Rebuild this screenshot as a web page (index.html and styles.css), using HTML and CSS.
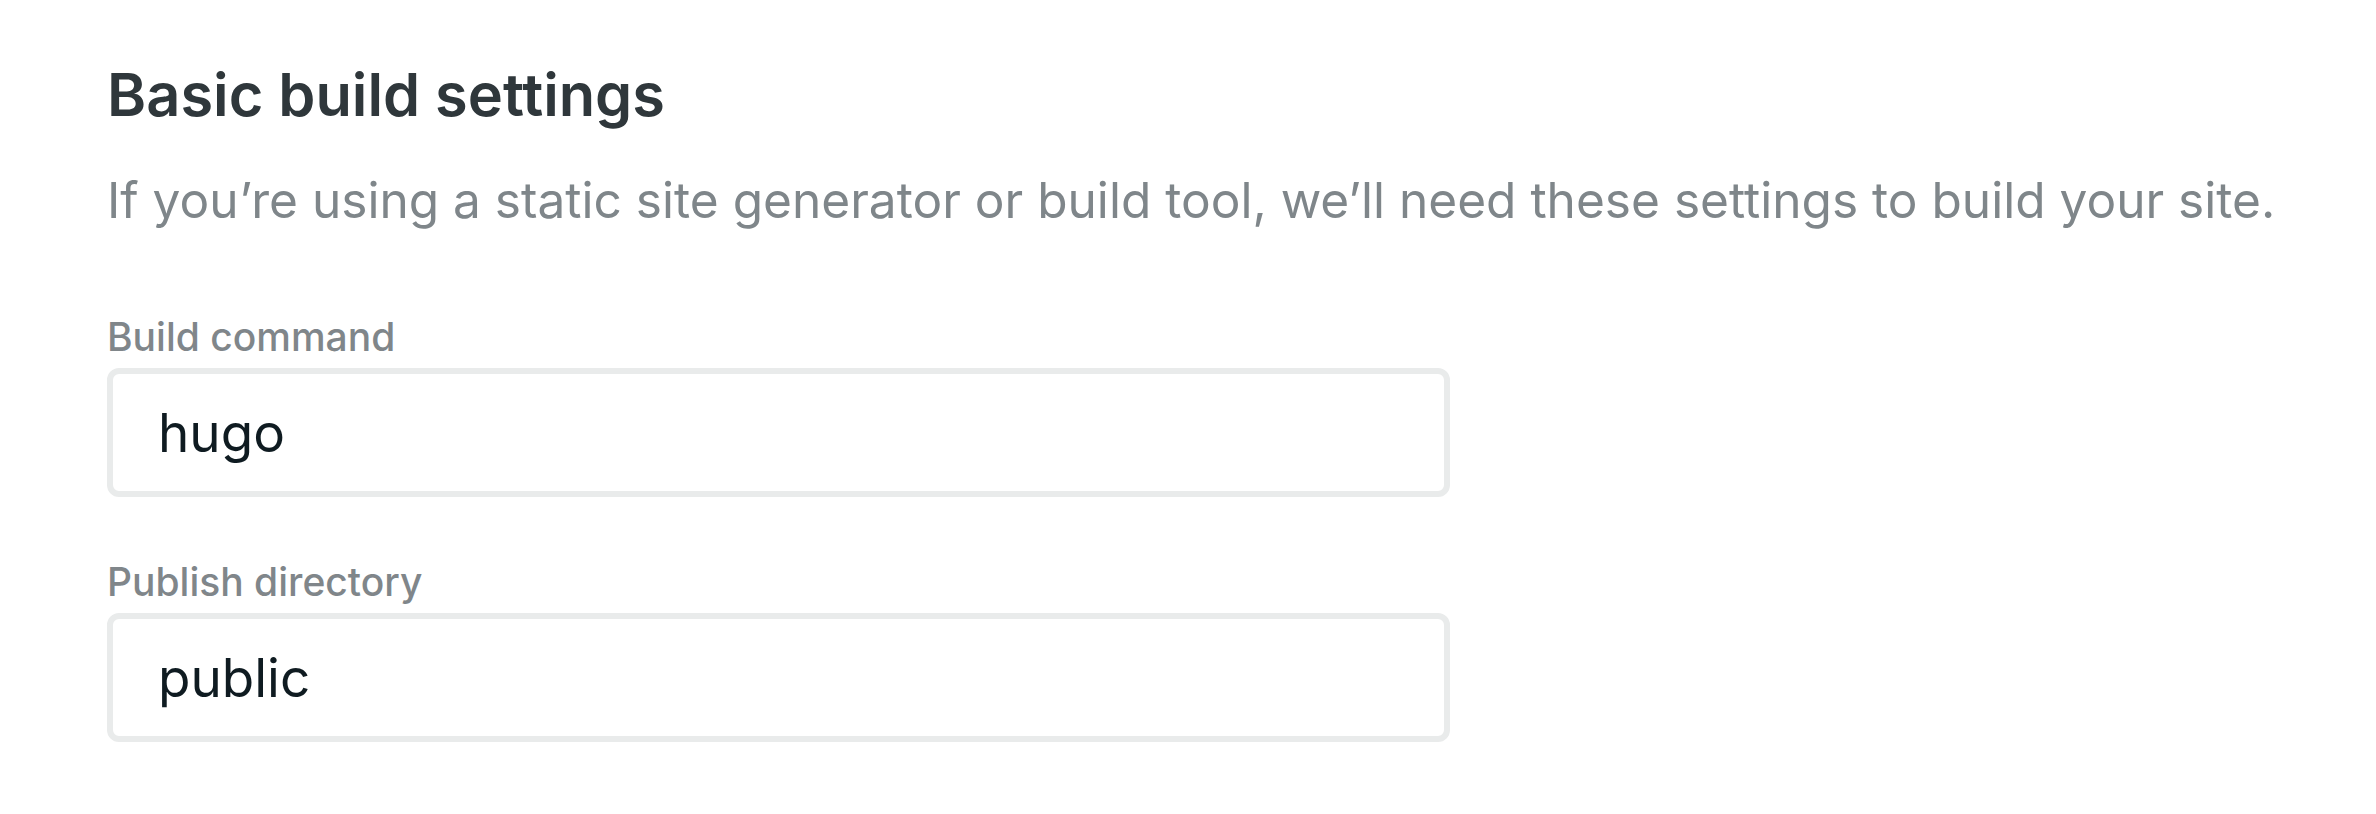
FILE: index.html
```html
<!DOCTYPE html>
<html lang="en">
<head>
<meta charset="utf-8">
<title>Basic build settings</title>
<link rel="stylesheet" href="styles.css">
</head>
<body>
<section class="settings">
  <h2 class="settings-title">Basic build settings</h2>
  <p class="settings-desc">If you’re using a static site generator or build tool, we’ll need these settings to build your site.</p>
  <div class="field field-first">
    <label class="field-label" for="cmd">Build command</label>
    <input class="field-input" id="cmd" type="text" value="hugo">
  </div>
  <div class="field">
    <label class="field-label" for="dir">Publish directory</label>
    <input class="field-input" id="dir" type="text" value="public">
  </div>
</section>
</body>
</html>
```

FILE: styles.css
```css
html, body {
  margin: 0;
  padding: 0;
  background: #ffffff;
}

body {
  font-family: Inter, "Noto Sans", "Liberation Sans", sans-serif;
}

.settings {
  padding: 59px 0 0 107px;
}

.settings-title {
  margin: 0;
  font-size: 59.5px;
  line-height: 70px;
  font-weight: 600;
  color: #2f373b;
  letter-spacing: 0;
}

.settings-desc {
  margin: 41px 0 0;
  font-size: 49.6px;
  line-height: 60px;
  font-weight: 400;
  color: #7f868a;
}

.field {
  display: flex;
  flex-direction: column;
  gap: 7px;
  margin-top: 61px;
  width: 1343px;
}

.field-first {
  margin-top: 83px;
}

.field-label {
  font-size: 39px;
  line-height: 48px;
  font-weight: 500;
  color: #80868a;
}

.field-input {
  box-sizing: border-box;
  width: 1343px;
  height: 129px;
  margin: 0;
  padding: 0 0 0 45px;
  border: 6px solid #e9ebeb;
  border-radius: 12px;
  background: #ffffff;
  font-family: Inter, "Noto Sans", "Liberation Sans", sans-serif;
  font-size: 53px;
  color: #0f1b21;
  outline: none;
}
```
